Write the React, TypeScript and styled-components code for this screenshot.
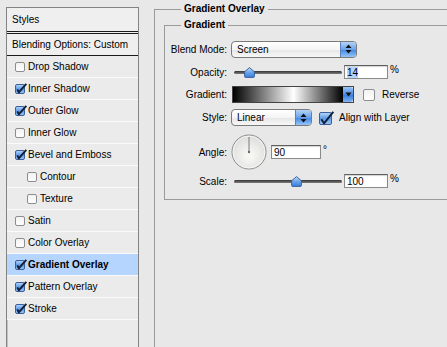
import React from "react";
import styled, { createGlobalStyle } from "styled-components";

const GlobalStyle = createGlobalStyle`
  html, body {
    margin: 0;
    padding: 0;
    background: #e8e8e8;
  }
  body {
    font-family: "Liberation Sans", Arial, sans-serif;
    font-size: 10px;
    color: #000;
  }
`;

const Page = styled.div`
  width: 447px;
  height: 347px;
  overflow: hidden;
  display: flex;
  align-items: flex-start;
`;

const Sidebar = styled.div`
  flex: none;
  width: 133px;
  height: 400px;
  margin: 7px 0 0 6px;
  box-sizing: border-box;
  border: 1px solid #838383;
  background: #ebebeb;
  box-shadow: inset 1px 0 0 #c2c2c2;
`;

const SideHeader = styled.div<{ $double?: boolean }>`
  height: ${(p) => (p.$double ? 23 : 21)}px;
  padding-left: 5px;
  display: flex;
  align-items: center;
  background: #efefef;
  border-bottom: ${(p) => (p.$double ? "3px double #1a1a1a" : "1px solid #1a1a1a")};
`;

const StyleRow = styled.div<{ $indent?: boolean; $active?: boolean }>`
  height: 21px;
  padding-left: ${(p) => (p.$indent ? 20 : 8)}px;
  display: flex;
  align-items: center;
  border-bottom: 1px solid #fbfbfb;
  background: ${(p) => (p.$active ? "#b5d5ff" : "#ebebeb")};
  font-weight: ${(p) => (p.$active ? "bold" : "normal")};
`;

const Main = styled.div`
  flex: none;
  width: 330px;
  margin: 3px 0 0 15px;
`;

const Group = styled.fieldset<{ $pad: string; $minH?: number }>`
  margin: 0;
  padding: ${(p) => p.$pad};
  min-width: 0;
  min-height: ${(p) => p.$minH ?? 0}px;
  border: 1px solid #9a9a9a;
`;

const Legend = styled.legend<{ $offset: number }>`
  margin-left: ${(p) => p.$offset}px;
  padding: 0 3px;
  line-height: 12px;
  font-weight: bold;
`;

const Row = styled.div<{ $h: number; $mt?: number }>`
  display: flex;
  align-items: center;
  height: ${(p) => p.$h}px;
  margin-top: ${(p) => p.$mt ?? 6}px;
`;

const Label = styled.span`
  flex: none;
  width: 62px;
  margin-right: 4px;
  text-align: right;
`;

const Select = styled.div<{ $w: number }>`
  flex: none;
  width: ${(p) => p.$w}px;
  height: 17px;
  box-sizing: border-box;
  border: 1px solid #7a7a7a;
  border-radius: 4px;
  background: linear-gradient(#ffffff, #f4f4f4 50%, #e6e6e6 51%, #f7f7f7);
  display: flex;
  align-items: center;
  overflow: hidden;
`;

const SelectText = styled.span`
  flex: 1;
  padding-left: 5px;
`;

const Stepper = styled.span`
  width: 15px;
  height: 100%;
  border-left: 1px solid #5b7fb6;
  background: linear-gradient(#b3d3f8, #6aa2ea 50%, #3f86e4 51%, #95c5f6);
  display: flex;
  align-items: center;
  justify-content: center;
`;

const Slider = styled.div`
  position: relative;
  flex: none;
  width: 113px;
  height: 16px;
`;

const Track = styled.div`
  position: absolute;
  left: 3px;
  right: 2px;
  top: 7px;
  height: 3px;
  border-radius: 2px;
  background: linear-gradient(#333, #7d7d7d);
`;

const Thumb = styled.svg`
  position: absolute;
  top: 3px;
`;

const Field = styled.div<{ $w: number }>`
  flex: none;
  width: ${(p) => p.$w}px;
  height: 14px;
  box-sizing: border-box;
  border: 1px solid #8a8a8a;
  border-top-color: #5f5f5f;
  background: #fff;
  box-shadow: inset 0 1px 1px rgba(0, 0, 0, 0.18);
  padding-left: 2px;
  display: flex;
  align-items: center;
`;

const Selected = styled.span`
  background: #b5d5ff;
`;

const Unit = styled.span`
  margin: 0 0 5px 2px;
  line-height: 12px;
`;

const GradientPicker = styled.div`
  flex: none;
  display: flex;
  width: 122px;
  height: 17px;
  margin-left: 1px;
  box-sizing: border-box;
  border: 1px solid #444;
`;

const GradientSwatch = styled.div`
  flex: 1;
  background: linear-gradient(to right, #000 0%, #fff 55%, #000 100%);
`;

const GradientArrow = styled.span`
  width: 10px;
  border-radius: 0 3px 3px 0;
  background: linear-gradient(#9cc6f6, #4a8de6 50%, #2f78dc 51%, #7fb5f2);
  display: flex;
  align-items: center;
  justify-content: center;
`;

const CheckLabel = styled.span<{ $ml: number }>`
  display: flex;
  align-items: center;
  margin-left: ${(p) => p.$ml}px;
  gap: 5px;
`;

const Dial = styled.svg`
  flex: none;
  margin-right: 4px;
`;

function Check({ on, size = 10, gap = 0 }: { on?: boolean; size?: number; gap?: number }) {
  const id = React.useId();
  return (
    <svg
      width={size + 3 + gap}
      height={size + 2}
      viewBox={`0 0 ${size + 3 + gap} ${size + 2}`}
      style={{ flex: "none" }}
    >
      <defs>
        <linearGradient id={id} x1="0" y1="0" x2="0" y2="1">
          {on ? (
            <>
              <stop offset="0" stopColor="#b9d8fb" />
              <stop offset="0.5" stopColor="#5d9ae9" />
              <stop offset="1" stopColor="#9cc8f7" />
            </>
          ) : (
            <>
              <stop offset="0" stopColor="#f2f2f2" />
              <stop offset="1" stopColor="#ffffff" />
            </>
          )}
        </linearGradient>
      </defs>
      <rect x="0.5" y="1.5" width={size} height={size} rx="1.5" fill={`url(#${id})`} stroke={on ? "#3c5f99" : "#8d8d8d"} />
      {on && (
        <path
          d={`M2.3 ${size * 0.6 + 1} L${size * 0.42} ${size + 0.3} L${size + 2.3} 0.8`}
          fill="none"
          stroke="#10203c"
          strokeWidth="2"
          strokeLinejoin="round"
        />
      )}
    </svg>
  );
}

function Arrows() {
  return (
    <svg width="7" height="10" viewBox="0 0 7 10">
      <path d="M3.5 0.5 L6.5 4 H0.5 Z M3.5 9.5 L6.5 6 H0.5 Z" fill="#111" />
    </svg>
  );
}

function Range({ frac }: { frac: number }) {
  const id = React.useId();
  return (
    <Slider>
      <Track />
      <Thumb width="11" height="11" viewBox="0 0 11 11" style={{ left: 3 + frac * 108 - 5.5 }}>
        <defs>
          <linearGradient id={id} x1="0" y1="0" x2="0" y2="1">
            <stop offset="0" stopColor="#c7e0fb" />
            <stop offset="0.5" stopColor="#6aa3ea" />
            <stop offset="1" stopColor="#3a7edb" />
          </linearGradient>
        </defs>
        <path d="M5.5 0.6 L10.4 4.8 V9.5 Q10.4 10.4 9.5 10.4 H1.5 Q0.6 10.4 0.6 9.5 V4.8 Z" fill={`url(#${id})`} stroke="#3b629c" />
      </Thumb>
    </Slider>
  );
}

const layerStyles: { name: string; on?: boolean; indent?: boolean; active?: boolean }[] = [
  { name: "Drop Shadow" },
  { name: "Inner Shadow", on: true },
  { name: "Outer Glow", on: true },
  { name: "Inner Glow" },
  { name: "Bevel and Emboss", on: true },
  { name: "Contour", indent: true },
  { name: "Texture", indent: true },
  { name: "Satin" },
  { name: "Color Overlay" },
  { name: "Gradient Overlay", on: true, active: true },
  { name: "Pattern Overlay", on: true },
  { name: "Stroke", on: true },
];

export default function App() {
  return (
    <Page>
      <GlobalStyle />
      <Sidebar>
        <SideHeader $double>Styles</SideHeader>
        <SideHeader>Blending Options: Custom</SideHeader>
        {layerStyles.map((s) => (
          <StyleRow key={s.name} $indent={s.indent} $active={s.active}>
            <Check on={s.on} size={9} gap={1} />
            {s.name}
          </StyleRow>
        ))}
      </Sidebar>
      <Main>
        <Group $pad="4px 0 0 9px" $minH={400}>
          <Legend $offset={17}>Gradient Overlay</Legend>
          <Group $pad="9px 0 10px 0">
            <Legend $offset={16}>Gradient</Legend>
            <Row $h={18} $mt={0}>
              <Label>Blend Mode:</Label>
              <Select $w={126}>
                <SelectText>Screen</SelectText>
                <Stepper>
                  <Arrows />
                </Stepper>
              </Select>
            </Row>
            <Row $h={16}>
              <Label>Opacity:</Label>
              <Range frac={0.14} />
              <Field $w={44}>
                <Selected>14</Selected>
              </Field>
              <Unit>%</Unit>
            </Row>
            <Row $h={17}>
              <Label>Gradient:</Label>
              <GradientPicker>
                <GradientSwatch />
                <GradientArrow>
                  <svg width="7" height="5" viewBox="0 0 7 5">
                    <path d="M0.5 0.5 H6.5 L3.5 4.5 Z" fill="#111" />
                  </svg>
                </GradientArrow>
              </GradientPicker>
              <CheckLabel $ml={9}>
                <Check size={11} />
                Reverse
              </CheckLabel>
            </Row>
            <Row $h={17}>
              <Label>Style:</Label>
              <Select $w={81}>
                <SelectText>Linear</SelectText>
                <Stepper>
                  <Arrows />
                </Stepper>
              </Select>
              <CheckLabel $ml={7}>
                <Check on size={12} />
                Align with Layer
              </CheckLabel>
            </Row>
            <Row $h={36} $mt={8}>
              <Label>Angle:</Label>
              <Dial width="36" height="36" viewBox="0 0 36 36">
                <defs>
                  <radialGradient id="dialFill" cx="0.5" cy="0.6" r="0.6">
                    <stop offset="0" stopColor="#fbfbf6" />
                    <stop offset="1" stopColor="#dcdcdc" />
                  </radialGradient>
                </defs>
                <circle cx="18" cy="18" r="17" fill="url(#dialFill)" stroke="#8a8a8a" />
                <circle cx="18" cy="18" r="16" fill="none" stroke="#ffffff" strokeOpacity="0.7" />
                <line x1="18" y1="18" x2="18" y2="3" stroke="#7a7a7a" strokeWidth="1" />
                <circle cx="18" cy="18" r="1.2" fill="#6a6a6a" />
              </Dial>
              <Field $w={50}>90</Field>
              <Unit>°</Unit>
            </Row>
            <Row $h={16} $mt={3}>
              <Label>Scale:</Label>
              <Range frac={0.575} />
              <Field $w={44}>100</Field>
              <Unit>%</Unit>
            </Row>
          </Group>
        </Group>
      </Main>
    </Page>
  );
}
